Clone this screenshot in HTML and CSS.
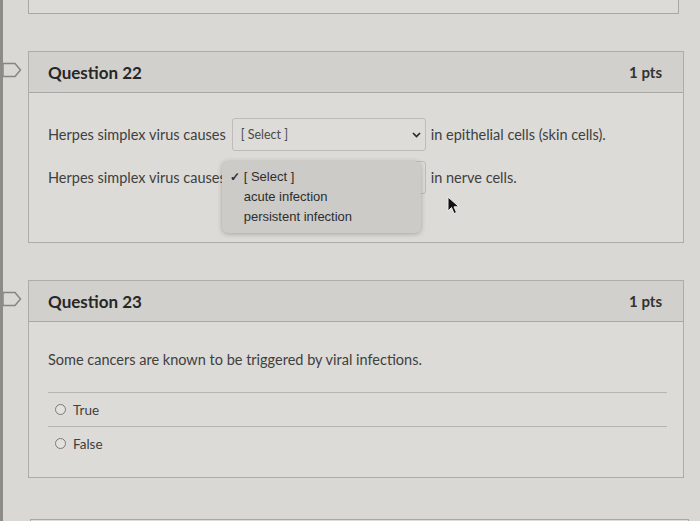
FILE: index.html
```html
<!DOCTYPE html>
<html>
<head>
<meta charset="utf-8">
<link rel="stylesheet" href="styles.css">
</head>
<body>
<div class="page">
  <div class="prev-card"></div>

  <div class="qrow">
    <div class="gutter">
      <svg class="flag" width="20" height="16" viewBox="0 0 20 16"><path d="M1 1.5 H13 L18.5 8 L13 14.5 H1 Z" fill="none" stroke="#868582" stroke-width="1.5"/></svg>
    </div>
    <div class="card">
      <div class="card-head">
        <span class="q-title">Question 22</span>
        <span class="q-pts">1 pts</span>
      </div>
      <div class="card-body fill-body">
        <div class="fill-row">
          <span>Herpes simplex virus causes</span>
          <span class="select">
            <span class="select-text">[ Select ]</span>
            <svg class="chev" width="9" height="6" viewBox="0 0 9 6"><path d="M1 1 L4.5 4.5 L8 1" fill="none" stroke="#2a2a2a" stroke-width="1.7"/></svg>
          </span>
          <span class="after">in epithelial cells (skin cells).</span>
        </div>
        <div class="fill-row">
          <span>Herpes simplex virus causes</span>
          <span class="select open">
            <span class="select-text covered">[ Select ]</span>
            <svg class="chev" width="9" height="6" viewBox="0 0 9 6"><path d="M1 1 L4.5 4.5 L8 1" fill="none" stroke="#2a2a2a" stroke-width="1.7"/></svg>
            <span class="menu">
              <span class="menu-item"><span class="check">✓</span>[ Select ]</span>
              <span class="menu-item">acute infection</span>
              <span class="menu-item">persistent infection</span>
            </span>
          </span>
          <span class="after">in nerve cells.</span>
        </div>
        <svg class="cursor" width="14" height="20" viewBox="0 0 14 20"><path d="M1 1 L1 15 L4.5 11.5 L7 17.5 L9.5 16.5 L7 10.8 L12 10.8 Z" fill="#111" stroke="#eee" stroke-width="1"/></svg>
      </div>
    </div>
  </div>

  <div class="qrow">
    <div class="gutter">
      <svg class="flag" width="20" height="16" viewBox="0 0 20 16"><path d="M1 1.5 H13 L18.5 8 L13 14.5 H1 Z" fill="none" stroke="#868582" stroke-width="1.5"/></svg>
    </div>
    <div class="card">
      <div class="card-head">
        <span class="q-title">Question 23</span>
        <span class="q-pts">1 pts</span>
      </div>
      <div class="card-body tf-body">
        <p class="q-text">Some cancers are known to be triggered by viral infections.</p>
        <div class="answers">
          <div class="answer"><span class="radio"></span><span>True</span></div>
          <div class="answer"><span class="radio"></span><span>False</span></div>
        </div>
      </div>
    </div>
  </div>

  <div class="next-card"></div>
</div>
</body>
</html>
```
FILE: styles.css
```css
html, body {
  margin: 0;
  padding: 0;
}
body {
  background: #d9d8d4;
  border-left: 3px solid #8c8b88;
  min-height: 521px;
  box-sizing: border-box;
  font-family: Lato, "Open Sans", sans-serif;
  color: #404040;
  overflow: hidden;
}
.page {
  display: flex;
  flex-direction: column;
}
.prev-card {
  margin-left: 25px;
  width: 651px;
  height: 14px;
  box-sizing: border-box;
  border: 1px solid #a9a8a4;
  border-top: 0;
  background: #dcdbd7;
}
.qrow {
  display: flex;
  margin-top: 37px;
}
.gutter {
  width: 25px;
  flex: none;
  padding-top: 11px;
  position: relative;
  z-index: 1;
}
.flag {
  display: block;
  margin-left: -1px;
}
.card {
  width: 656px;
  box-sizing: border-box;
  border: 1px solid #adaca8;
  background: #dcdbd7;
  position: relative;
}
.card-head {
  height: 40px;
  display: flex;
  align-items: center;
  justify-content: space-between;
  padding: 0 21px 0 19px;
  background: #d1d0cc;
  border-bottom: 1px solid #a9a8a4;
}
.q-title {
  font-size: 17px;
  font-weight: 700;
  color: #272727;
}
.q-pts {
  font-size: 15px;
  font-weight: 700;
  color: #333;
}
.card-body {
  position: relative;
}
.fill-body {
  padding: 25px 0 48px 19px;
  display: flex;
  flex-direction: column;
  gap: 10px;
  font-size: 14.5px;
}
.fill-row {
  display: flex;
  align-items: center;
  height: 33px;
  white-space: nowrap;
}
.select {
  position: relative;
  width: 194px;
  height: 33px;
  box-sizing: border-box;
  margin-left: 6px;
  border: 1px solid #bdbcb8;
  border-radius: 3px;
  background: #dddcd8;
  display: flex;
  align-items: center;
  justify-content: space-between;
  padding: 0 4px 0 8px;
}
.select-text {
  font-size: 12.5px;
  color: #4a4a4a;
}
.select-text.covered {
  visibility: hidden;
}
.chev {
  display: block;
}
.after {
  margin-left: 5px;
}
.menu {
  position: absolute;
  left: -11px;
  top: -1px;
  width: 199px;
  box-sizing: border-box;
  padding: 6px 0;
  background: #cccbc7;
  border-radius: 6px;
  box-shadow: 0 1px 5px rgba(0, 0, 0, 0.25);
  display: flex;
  flex-direction: column;
  font-family: "Liberation Sans", Arial, sans-serif;
  font-size: 13px;
  color: #2e2e2e;
}
.menu-item {
  height: 20px;
  line-height: 20px;
  padding-left: 22px;
  position: relative;
}
.check {
  position: absolute;
  left: 8px;
  top: 0;
  font-size: 12px;
  font-weight: 700;
}
.cursor {
  position: absolute;
  left: 418px;
  top: 103px;
}
.tf-body {
  padding: 28px 16px 17px 19px;
}
.q-text {
  margin: 0;
  font-size: 14.5px;
  line-height: 20px;
}
.answers {
  margin-top: 22px;
}
.answer {
  display: flex;
  align-items: center;
  height: 33px;
  border-top: 1px solid #b6b5b1;
  font-size: 13.5px;
  padding-left: 7px;
  gap: 7px;
}
.radio {
  width: 11px;
  height: 11px;
  box-sizing: border-box;
  border: 1px solid #7b7a77;
  border-radius: 50%;
  background: #e2e1dd;
}
.next-card {
  margin-left: 27px;
  margin-top: 41px;
  width: 659px;
  height: 20px;
  box-sizing: border-box;
  border: 1px solid #a9a8a4;
  border-bottom: 0;
  background: #dcdbd7;
}
```
